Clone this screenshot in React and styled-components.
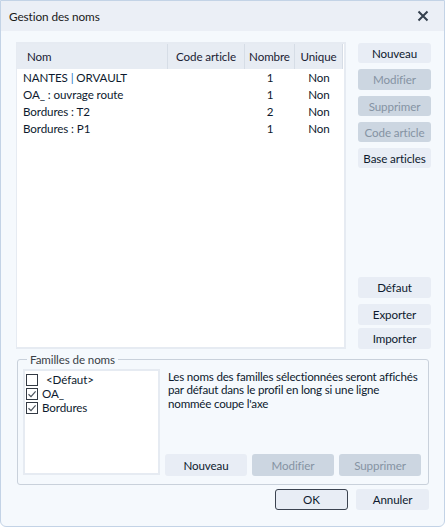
import React from 'react'
import styled, { createGlobalStyle } from 'styled-components'

const Global = createGlobalStyle`
  html, body {
    margin: 0;
    padding: 0;
    background: #ffffff;
  }
  * {
    box-sizing: border-box;
  }
`

const Window = styled.div`
  width: 445px;
  height: 527px;
  display: flex;
  flex-direction: column;
  background: #f5f9fd;
  border: 1px solid #c3d3e6;
  border-radius: 0 0 6px 6px;
  font-family: Lato, 'Liberation Sans', sans-serif;
  font-size: 11.6px;
  letter-spacing: -0.1px;
  color: #0d1a2e;
  overflow: hidden;
`

const TitleBar = styled.div`
  height: 30px;
  flex: none;
  display: flex;
  align-items: center;
  justify-content: space-between;
  padding: 0 15px 0 8px;
  background: #ebeff6;
  font-size: 11.8px;
  color: #1a1a1a;
`

const Body = styled.div`
  flex: 1;
  display: flex;
  flex-direction: column;
  padding: 11px 14px 0 15px;
`

const Top = styled.div`
  display: flex;
  gap: 12px;
  height: 307px;
`

const ListBox = styled.div`
  width: 330px;
  display: flex;
  flex-direction: column;
  background: #ffffff;
  border: 2px solid #e6ebf2;
  border-left-width: 1px;
`

const HeadRow = styled.div`
  display: grid;
  grid-template-columns: 151px 77px 50px 48px;
  height: 25px;
  background: #e7ecf3;
  margin-right: 2px;
`

const HeadCell = styled.div`
  display: flex;
  align-items: center;
  justify-content: ${p => (p.$left ? 'flex-start' : 'center')};
  padding-left: ${p => (p.$left ? '10px' : '0')};
  border-right: 1px solid #d6dde6;
  color: #1a2233;
`

const Rows = styled.div`
  display: flex;
  flex-direction: column;
`

const Row = styled.div`
  display: grid;
  grid-template-columns: 151px 77px 50px 48px;
  height: 17px;
  line-height: 17px;
  align-items: center;
`

const Cell = styled.div`
  text-align: ${p => (p.$left ? 'left' : 'center')};
  padding-left: ${p => (p.$left ? '6px' : '0')};
  white-space: nowrap;
`

const Pipe = styled.span`
  color: #2f78c4;
`

const SideColumn = styled.div`
  width: 73px;
  display: flex;
  flex-direction: column;
  gap: 6px;
  padding-top: 1px;
`

const Spacer = styled.div`
  flex: 1;
`

const Button = styled.button`
  width: ${p => p.$w || 73}px;
  height: ${p => p.$h || 20}px;
  flex: none;
  border: ${p => (p.$default ? '1px solid #3b4350' : 'none')};
  border-radius: 3px;
  background: ${p => (p.$disabled ? '#ccd6e1' : '#e8edf5')};
  color: ${p => (p.$disabled ? '#8593a3' : '#0d1a2e')};
  font-family: inherit;
  font-size: 11.6px;
  letter-spacing: -0.1px;
  padding: 0;
  margin-top: ${p => p.$mt || 0}px;
`

const Group = styled.fieldset`
  margin: 4px 0 0 1px;
  width: 412px;
  height: 132px;
  border: 1px solid #c9d1db;
  border-radius: 3px;
  padding: 0 6px 7px 5px;
  display: flex;
  gap: 8px;
`

const Legend = styled.legend`
  padding: 0 3px;
  margin-left: 4px;
  color: #3a3f47;
  font-size: 11.6px;
`

const CheckList = styled.div`
  width: 137px;
  height: 106px;
  margin-top: 3px;
  background: #ffffff;
  border: 2px solid #e6ebf2;
  display: flex;
  flex-direction: column;
  padding: 2px 0 0 1px;
`

const CheckItem = styled.label`
  display: flex;
  align-items: center;
  height: 14px;
  line-height: 14px;
  gap: ${p => (p.$wide ? '8px' : '4px')};
`

const Box = styled.span`
  width: 12px;
  height: 12px;
  flex: none;
  border: 1px solid #333a44;
  background: #ffffff;
  display: flex;
  align-items: center;
  justify-content: center;
`

const Right = styled.div`
  flex: 1;
  display: flex;
  flex-direction: column;
`

const Note = styled.p`
  margin: 4px 0 0 0;
  line-height: 13.4px;
  letter-spacing: -0.2px;
  white-space: nowrap;
  color: #0d1a2e;
`

const ButtonRow = styled.div`
  margin-top: auto;
  display: flex;
  gap: 5px;
  margin-left: -3px;
  margin-bottom: -1px;
`

const Footer = styled.div`
  display: flex;
  justify-content: flex-end;
  gap: 8px;
  padding: 4px 1px 0 0;
`

const Check = () => (
  <svg width="10" height="10" viewBox="0 0 10 10">
    <path d="M1.5 5.2 L4 7.6 L8.6 2.4" fill="none" stroke="#4a525c" strokeWidth="1.2" />
  </svg>
)

const Close = () => (
  <svg width="12" height="12" viewBox="0 0 12 12">
    <path d="M1.5 1.5 L10.5 10.5 M10.5 1.5 L1.5 10.5" stroke="#34404e" strokeWidth="2" />
  </svg>
)

const rows = [
  { nom: <>NANTES <Pipe>|</Pipe> ORVAULT</>, nb: 1 },
  { nom: 'OA_ : ouvrage route', nb: 1 },
  { nom: 'Bordures : T2', nb: 2 },
  { nom: 'Bordures : P1', nb: 1 },
]

const App = () => {
  return (
    <Window>
      <Global />
      <TitleBar>
        <span>Gestion des noms</span>
        <Close />
      </TitleBar>
      <Body>
        <Top>
          <ListBox>
            <HeadRow>
              <HeadCell $left>Nom</HeadCell>
              <HeadCell>Code article</HeadCell>
              <HeadCell>Nombre</HeadCell>
              <HeadCell>Unique</HeadCell>
            </HeadRow>
            <Rows>
              {rows.map((r, i) => (
                <Row key={i}>
                  <Cell $left>{r.nom}</Cell>
                  <Cell />
                  <Cell>{r.nb}</Cell>
                  <Cell>Non</Cell>
                </Row>
              ))}
            </Rows>
          </ListBox>
          <SideColumn>
            <Button>Nouveau</Button>
            <Button $disabled $h={21}>Modifier</Button>
            <Button $disabled>Supprimer</Button>
            <Button $disabled>Code article</Button>
            <Button>Base articles</Button>
            <Spacer />
            <Button $h={21}>Défaut</Button>
            <Button $h={21}>Exporter</Button>
            <Button $h={21} $mt={-3}>Importer</Button>
          </SideColumn>
        </Top>
        <Group>
          <Legend>Familles de noms</Legend>
          <CheckList>
            <CheckItem $wide>
              <Box />
              &lt;Défaut&gt;
            </CheckItem>
            <CheckItem>
              <Box><Check /></Box>
              OA_
            </CheckItem>
            <CheckItem>
              <Box><Check /></Box>
              Bordures
            </CheckItem>
          </CheckList>
          <Right>
            <Note>
              Les noms des familles sélectionnées seront affichés
              <br />
              par défaut dans le profil en long si une ligne
              <br />
              nommée coupe l'axe
            </Note>
            <ButtonRow>
              <Button $w={82} $h={22}>Nouveau</Button>
              <Button $w={82} $h={22} $disabled>Modifier</Button>
              <Button $w={82} $h={22} $disabled>Supprimer</Button>
            </ButtonRow>
          </Right>
        </Group>
        <Footer>
          <Button $default $h={21}>OK</Button>
          <Button $h={21}>Annuler</Button>
        </Footer>
      </Body>
    </Window>
  )
}

export default App
